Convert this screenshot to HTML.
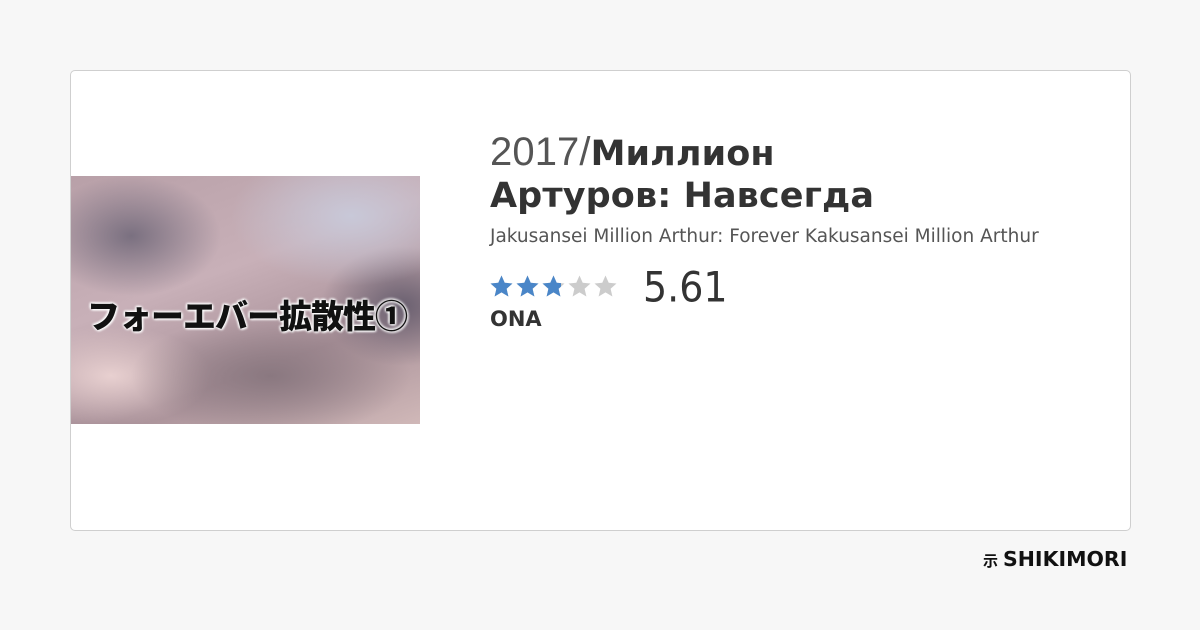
<!DOCTYPE html>
<html><head><meta charset="utf-8"><style>
*{margin:0;padding:0;box-sizing:border-box}
body{width:1200px;height:630px;background:#f7f7f7;position:relative;font-family:"Liberation Sans","DejaVu Sans",sans-serif;overflow:hidden}
.card{position:absolute;left:70px;top:70px;width:1061px;height:461px;background:#fff;border:1px solid #cfcfcf;border-radius:5px}
.img{position:absolute;left:71px;top:176px;width:349px;height:248px;overflow:hidden;
background:
radial-gradient(ellipse 120px 70px at 280px 40px,#c8c8d8,transparent),
radial-gradient(ellipse 90px 60px at 60px 60px,#7a7080,transparent),
radial-gradient(ellipse 140px 60px at 200px 200px,#8a7880,transparent),
radial-gradient(ellipse 100px 50px at 40px 200px,#e8d0d0,transparent),
radial-gradient(ellipse 80px 60px at 330px 130px,#6a6070,transparent),
linear-gradient(160deg,#b8a0a8,#c8b0b8 40%,#a89098 70%,#d0b8b8);}
.img span{position:absolute;left:16px;top:114px;font-family:"Noto Sans CJK JP",sans-serif;font-weight:900;font-size:33px;color:#111;letter-spacing:-1px;text-shadow:0 0 3px #fff,0 0 3px #fff,1px 1px 2px #fff,-1px -1px 2px #fff}
.t{position:absolute;left:490px;top:131px;font-family:"DejaVu Sans",sans-serif;font-size:35px;line-height:42px;color:#333;font-weight:bold;letter-spacing:0.1px}
.t .y{font-weight:normal;color:#555;font-family:"Liberation Sans",sans-serif;font-size:40px}
.sub{position:absolute;left:490px;top:226px;font-family:"DejaVu Sans",sans-serif;font-size:18.5px;color:#555}
.stars{position:absolute;left:490px;top:275px;height:23px;width:130px}
.score{position:absolute;left:643px;top:263px;font-family:"DejaVu Sans",sans-serif;font-size:38px;color:#333;transform:scaleY(1.1);transform-origin:top left}
.ona{position:absolute;left:490px;top:307px;font-family:"DejaVu Sans",sans-serif;font-weight:bold;font-size:21px;color:#333}
.logo{position:absolute;left:983px;top:547px;font-family:"DejaVu Sans",sans-serif;font-weight:bold;font-size:20.5px;color:#111}
.logo small{font-size:15px;font-family:"Noto Sans CJK JP",sans-serif;margin-right:5px}
</style></head><body>
<div class="card"></div>
<div class="img"><span>フォーエバー拡散性①</span></div>
<div class="t"><span class="y">2017/</span>Миллион<br>Артуров: Навсегда</div>
<div class="sub">Jakusansei Million Arthur: Forever Kakusansei Million Arthur</div>
<svg class="stars" viewBox="0 0 130 23">
<defs><path id="s" d="M11.5 0.5l3.2 7.3 7.8.7-5.9 5.2 1.8 7.8-6.9-4.1-6.9 4.1 1.8-7.8L0.5 8.5l7.8-.7z"/>
<clipPath id="c"><rect x="0" y="0" width="71" height="23"/></clipPath></defs>
<g fill="#cccccc"><use href="#s" x="0"/><use href="#s" x="26"/><use href="#s" x="52"/><use href="#s" x="78"/><use href="#s" x="104"/></g>
<g fill="#4a86c8" clip-path="url(#c)"><use href="#s" x="0"/><use href="#s" x="26"/><use href="#s" x="52"/></g>
</svg>
<div class="score">5.61</div>
<div class="ona">ONA</div>
<div class="logo"><small>示</small>SHIKIMORI</div>
</body></html>
